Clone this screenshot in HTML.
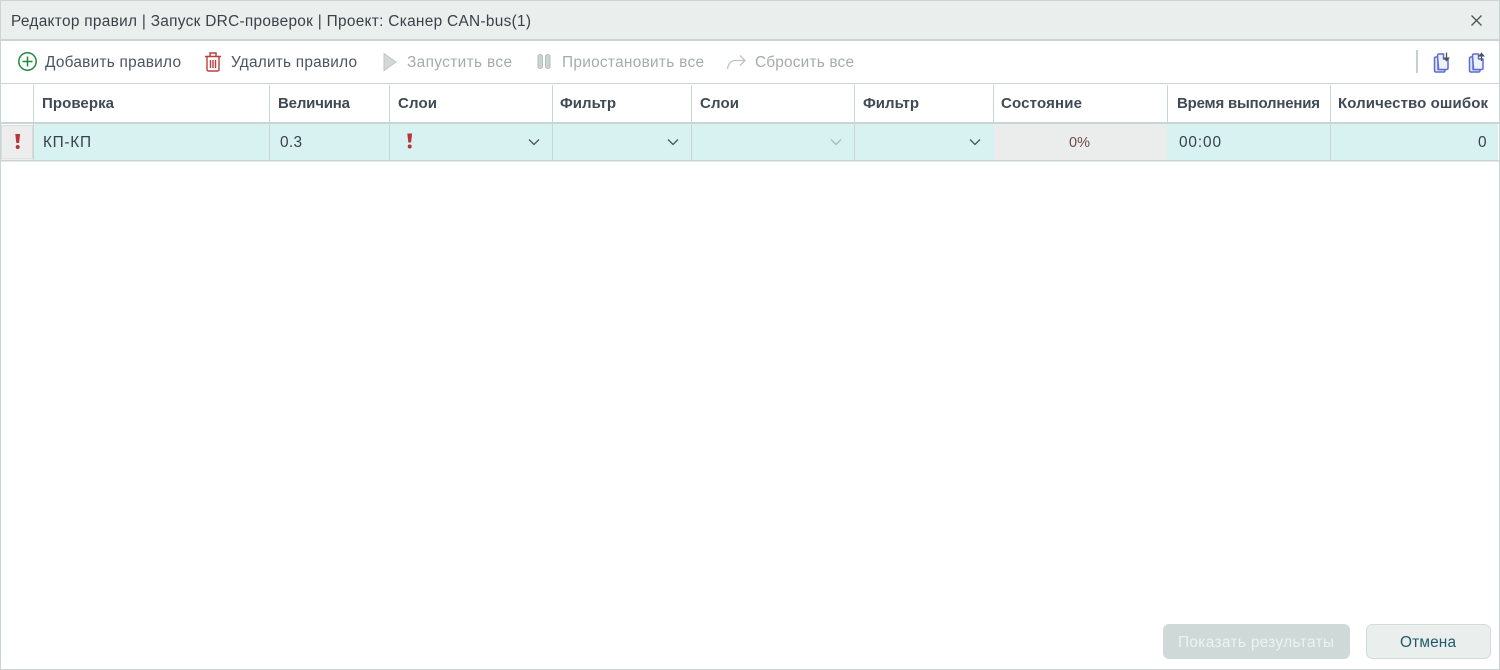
<!DOCTYPE html>
<html lang="ru"><head><meta charset="utf-8"><title>Редактор правил</title>
<style>
html,body{margin:0;padding:0;background:#fff}
svg{display:block}
text{font-family:"Liberation Sans","DejaVu Sans",sans-serif;font-size:15.4px}
.b{font-weight:700;fill:#3f4a54;font-size:15px}
.t{fill:#3a4149}
.d{fill:#a3acad}
</style></head>
<body>
<svg width="1500" height="670" viewBox="0 0 1500 670" xmlns="http://www.w3.org/2000/svg">
<rect width="1500" height="670" fill="#fff"/>
<!-- title -->
<rect x="1" y="1" width="1498" height="38" fill="#eaeeed"/>
<rect x="1" y="39" width="1498" height="2" fill="#c9d5d3"/>
<text x="11" y="26" class="t" textLength="520" lengthAdjust="spacing">Редактор правил | Запуск DRC-проверок | Проект: Сканер CAN-bus(1)</text>
<path d="M1471.5 15.500l10 10M1481.5 15.500l-10 10" stroke="#4a5358" stroke-width="1.300" fill="none"/>

<!-- toolbar -->
<circle cx="27.500" cy="61.500" r="8.700" fill="none" stroke="#1f8a3a" stroke-width="1.500"/>
<path d="M27.500 56.500v10M22.500 61.500h10" stroke="#1f8a3a" stroke-width="1.500"/>
<text x="45" y="67" textLength="136" lengthAdjust="spacing" style="fill:#4a5560">Добавить правило</text>
<path d="M205 56.500h16M210 56v-3h6v3" fill="none" stroke="#b8403f" stroke-width="1.500"/>
<path d="M207 57v12.500q0 1.500 1.500 1.500h9q1.500 0 1.500-1.500V57M210.500 60v8M213 60v8M215.500 60v8" fill="none" stroke="#b8403f" stroke-width="1.400"/>
<text x="231" y="67" textLength="126" lengthAdjust="spacing" style="fill:#4a5560">Удалить правило</text>

<path d="M384 53.500l12 8.500-12 8.500z" fill="#d3d9d8" stroke="#bcc5c4"/>
<text x="407" y="67" class="d" textLength="105" lengthAdjust="spacing">Запустить все</text>
<rect x="538" y="54.500" width="4.500" height="14" rx="2" fill="#ccd3d2" stroke="#b5bfbe"/>
<rect x="545.500" y="54.500" width="4.500" height="14" rx="2" fill="#ccd3d2" stroke="#b5bfbe"/>
<text x="562" y="67" class="d" textLength="142" lengthAdjust="spacing">Приостановить все</text>
<path d="M727.500 69c.5-5 3.500-8.500 8-8.500h9M740 55.500l5 5-5 5" fill="none" stroke="#bcc5c4" stroke-width="1.300"/>
<text x="755" y="67" class="d" textLength="99" lengthAdjust="spacing">Сбросить все</text>

<rect x="1416" y="50" width="2" height="23" fill="#c5d0cf"/>
<g fill="#dfe4f8" stroke="#5a6fd0" stroke-width="1.500" stroke-linejoin="round">
<path d="M1434.500 58.500q0-1.500 1.500-1.500h2v12.500h7v1q0 1.500-1.500 1.500h-7.500q-1.500 0-1.500-1.500z"/>
<path d="M1437.500 55.500q0-1.500 1.500-1.500h4.500v5h4.500v9q0 1.500-1.500 1.500h-7q-1 0-1-1z" fill="#eef0fb"/>
<path d="M1469.500 58.500q0-1.500 1.500-1.500h2v12.500h7v1q0 1.500-1.500 1.500h-7.500q-1.500 0-1.500-1.500z"/>
<path d="M1472.500 55.500q0-1.500 1.500-1.500h4.500v5h4.500v9q0 1.500-1.500 1.500h-7q-1 0-1-1z" fill="#eef0fb"/>
</g>
<path d="M1446.500 52.500v6" stroke="#4a5358" stroke-width="1.300"/><path d="M1443 57.500h7l-3.500 4z" fill="#4a5358"/>
<path d="M1481.500 55v6" stroke="#4a5358" stroke-width="1.300"/><path d="M1478 56.500h7l-3.500-4z" fill="#4a5358"/>

<rect x="1" y="83" width="1498" height="1" fill="#c9d5d3"/>

<!-- header -->
<rect x="1" y="122" width="1498" height="2" fill="#c9d5d3"/>
<g fill="#c9d5d3">
<rect x="33" y="85" width="1" height="37"/><rect x="269" y="85" width="1" height="37"/><rect x="389" y="85" width="1" height="37"/>
<rect x="552" y="85" width="1" height="37"/><rect x="691" y="85" width="1" height="37"/><rect x="854" y="85" width="1" height="37"/>
<rect x="993" y="85" width="1" height="37"/><rect x="1167" y="85" width="1" height="37"/><rect x="1330" y="85" width="1" height="37"/>
</g>
<text x="42" y="108" class="b" textLength="72" lengthAdjust="spacing">Проверка</text>
<text x="278" y="108" class="b" textLength="72" lengthAdjust="spacing">Величина</text>
<text x="398" y="108" class="b" textLength="39" lengthAdjust="spacing">Слои</text>
<text x="560" y="108" class="b" textLength="56" lengthAdjust="spacing">Фильтр</text>
<text x="700" y="108" class="b" textLength="39" lengthAdjust="spacing">Слои</text>
<text x="863" y="108" class="b" textLength="56" lengthAdjust="spacing">Фильтр</text>
<text x="1001" y="108" class="b" textLength="81" lengthAdjust="spacing">Состояние</text>
<text x="1177" y="108" class="b" textLength="143" lengthAdjust="spacing">Время выполнения</text>
<text x="1338" y="108" class="b" textLength="150" lengthAdjust="spacing">Количество ошибок</text>

<!-- row -->
<rect x="34" y="124" width="1464" height="36" fill="#d8f2f1"/>
<rect x="994" y="124" width="173" height="36" fill="#ebeded"/>
<rect x="1.500" y="125.500" width="31" height="33.500" fill="#ecedec" stroke="#d5dcdb" stroke-width="1"/>
<rect x="1" y="160" width="1498" height="1.500" fill="#c9d5d3"/>
<g fill="#c9d5d3">
<rect x="33" y="124" width="1" height="36"/><rect x="269" y="124" width="1" height="36"/><rect x="389" y="124" width="1" height="36"/>
<rect x="552" y="124" width="1" height="36"/><rect x="691" y="124" width="1" height="36"/><rect x="854" y="124" width="1" height="36"/>
<rect x="1330" y="124" width="1" height="36"/>
</g>
<path d="M15.300 134h4.800l-1 9h-2.800z" fill="#b93436"/><circle cx="17.700" cy="147" r="2" fill="#b93436"/>
<path d="M407.300 133.500h4.800l-1 9h-2.800z" fill="#b93436"/><circle cx="409.700" cy="146.500" r="2" fill="#b93436"/>
<text x="43" y="147" class="t" textLength="48" lengthAdjust="spacing">КП-КП</text>
<text x="280" y="147" class="t" textLength="22" lengthAdjust="spacing">0.3</text>
<text x="1069" y="147" style="fill:#6e4a48;font-size:14.5px">0%</text>
<text x="1179" y="147" class="t" textLength="42" lengthAdjust="spacing">00:00</text>
<text x="1478" y="147" class="t" textLength="8" lengthAdjust="spacing">0</text>
<g fill="none" stroke-width="1.300">
<path d="M529 139.500l5 5 5-5" stroke="#4a5358"/>
<path d="M668 139.500l5 5 5-5" stroke="#4a5358"/>
<path d="M831 139.500l5 5 5-5" stroke="#a9b6b6"/>
<path d="M970 139.500l5 5 5-5" stroke="#4a5358"/>
</g>

<!-- buttons -->
<rect x="1163" y="624" width="187" height="35" rx="6" fill="#cfd9d8"/>
<text x="1178" y="647" textLength="156" lengthAdjust="spacing" style="fill:#eef2f1">Показать результаты</text>
<rect x="1366.500" y="624.500" width="124" height="34" rx="6" fill="#eaeeed" stroke="#cfdcdb"/>
<text x="1400" y="647" textLength="56" lengthAdjust="spacing" style="fill:#1d5c66">Отмена</text>

<!-- outer border -->
<rect x=".5" y=".5" width="1499" height="669" fill="none" stroke="#c9d5d3"/>
</svg>
</body></html>
